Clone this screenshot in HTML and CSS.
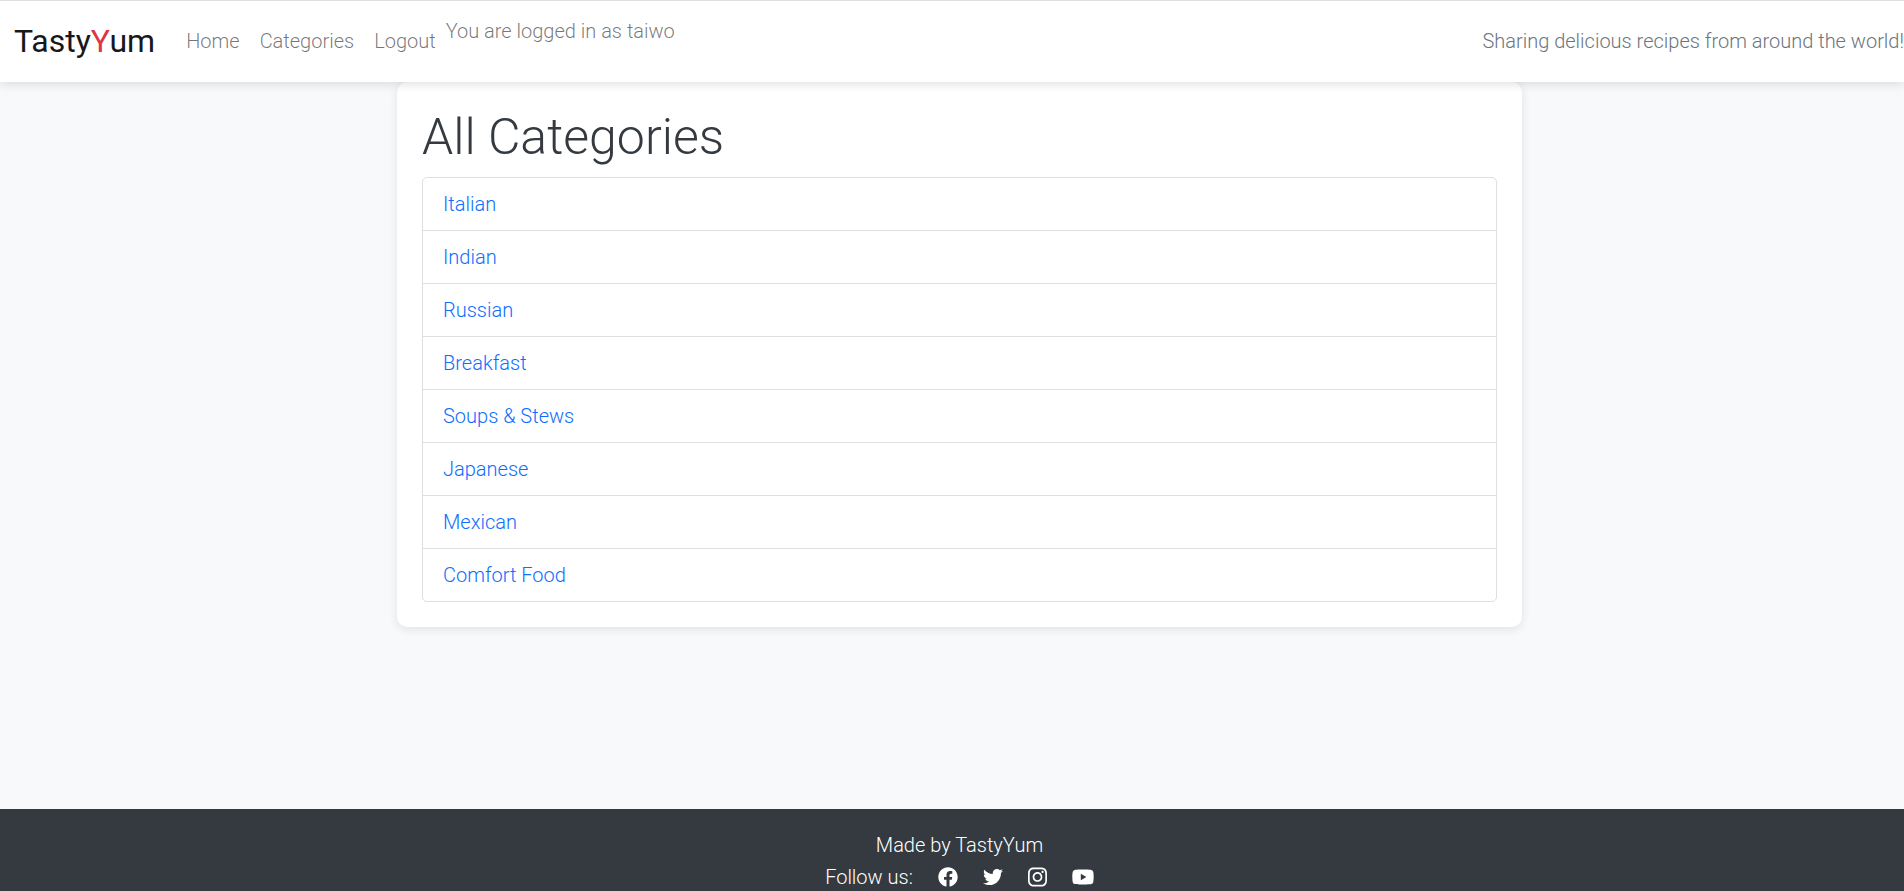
FILE: index.html
```
<!DOCTYPE html>
<html lang="en">
<head>
<meta charset="utf-8">
<title>TastyYum - All Categories</title>
<link rel="stylesheet" href="styles.css">
</head>
<body>
<header class="navbar">
  <a class="brand" href="#">Tasty<span class="brand-accent">Y</span>um</a>
  <nav class="nav-links">
    <a href="#">Home</a>
    <a href="#">Categories</a>
    <a href="#">Logout</a>
  </nav>
  <p class="status">You are logged in as taiwo</p>
  <p class="slogan">Sharing delicious recipes from around the world!</p>
</header>
<main class="content">
  <section class="card">
    <h1>All Categories</h1>
    <ul class="categories">
      <li><a href="#">Italian</a></li>
      <li><a href="#">Indian</a></li>
      <li><a href="#">Russian</a></li>
      <li><a href="#">Breakfast</a></li>
      <li><a href="#">Soups &amp; Stews</a></li>
      <li><a href="#">Japanese</a></li>
      <li><a href="#">Mexican</a></li>
      <li><a href="#">Comfort Food</a></li>
    </ul>
  </section>
</main>
<footer class="footer">
  <p>Made by TastyYum</p>
  <div class="social">
    <span>Follow us:</span>
    <a href="#" aria-label="Facebook"><svg width="20" height="20" viewBox="0 0 512 512"><path d="M504 256C504 119 393 8 256 8S8 119 8 256c0 123.780 90.690 226.380 209.250 245V327.690h-63V256h63v-54.640c0-62.150 37-96.480 93.670-96.480 27.140 0 55.520 4.840 55.520 4.840v61h-31.280c-30.800 0-40.410 19.120-40.410 38.730V256h68.780l-11 71.690h-57.780V501C413.310 482.380 504 379.780 504 256z"/></svg></a>
    <a href="#" aria-label="Twitter"><svg width="20" height="20" viewBox="0 0 512 512"><path d="M459.370 151.716c.325 4.548.325 9.097.325 13.645 0 138.720-105.583 298.558-298.558 298.558-59.452 0-114.680-17.219-161.137-47.106 8.447.974 16.568 1.299 25.340 1.299 49.055 0 94.213-16.568 130.274-44.832-46.132-.975-84.792-31.188-98.112-72.772 6.498.974 12.995 1.624 19.818 1.624 9.421 0 18.843-1.300 27.614-3.573-48.081-9.747-84.143-51.980-84.143-102.985v-1.299c13.969 7.797 30.214 12.670 47.431 13.319-28.264-18.843-46.781-51.005-46.781-87.391 0-19.492 5.197-37.360 14.294-52.954 51.655 63.675 129.300 105.258 216.365 109.807-1.624-7.797-2.599-15.918-2.599-24.040 0-57.828 46.782-104.934 104.934-104.934 30.213 0 57.502 12.670 76.670 33.137 23.715-4.548 46.456-13.320 66.599-25.340-7.798 24.366-24.366 44.833-46.132 57.827 21.117-2.273 41.584-8.122 60.426-16.243-14.292 20.791-32.161 39.308-52.628 54.253z"/></svg></a>
    <a href="#" aria-label="Instagram"><svg width="19" height="20" viewBox="0 32 448 448"><path d="M224.100 141c-63.600 0-114.900 51.300-114.900 114.900s51.300 114.900 114.900 114.900S339 319.500 339 255.900 287.700 141 224.100 141zm0 189.600c-41.100 0-74.700-33.500-74.700-74.700s33.500-74.700 74.700-74.700 74.700 33.500 74.700 74.700-33.600 74.700-74.700 74.700zm146.400-194.300c0 14.900-12 26.800-26.800 26.800-14.900 0-26.800-12-26.800-26.800s12-26.800 26.800-26.800 26.800 12 26.800 26.800zm76.100 27.200c-1.700-35.900-9.900-67.700-36.200-93.900-26.200-26.200-58-34.400-93.900-36.200-37-2.100-147.900-2.100-184.900 0-35.800 1.700-67.600 9.900-93.900 36.100s-34.400 58-36.200 93.900c-2.100 37-2.100 147.900 0 184.900 1.700 35.900 9.900 67.700 36.200 93.900s58 34.400 93.900 36.200c37 2.100 147.900 2.100 184.900 0 35.900-1.700 67.700-9.900 93.900-36.200 26.200-26.200 34.400-58 36.200-93.900 2.100-37 2.100-147.800 0-184.800zM398.800 388c-7.800 19.600-22.900 34.700-42.600 42.600-29.500 11.700-99.500 9-132.100 9s-102.700 2.600-132.100-9c-19.600-7.800-34.700-22.900-42.600-42.600-11.700-29.500-9-99.500-9-132.100s-2.600-102.700 9-132.100c7.800-19.600 22.900-34.700 42.600-42.600 29.500-11.700 99.500-9 132.100-9s102.700-2.600 132.100 9c19.600 7.800 34.700 22.900 42.600 42.600 11.700 29.500 9 99.500 9 132.100s2.700 102.700-9 132.100z"/></svg></a>
    <a href="#" aria-label="YouTube"><svg width="22" height="20" viewBox="12 0 552 512"><path d="M549.655 124.083c-6.281-23.650-24.787-42.276-48.284-48.597C458.781 64 288 64 288 64S117.220 64 74.629 75.486c-23.497 6.322-42.003 24.947-48.284 48.597-11.412 42.867-11.412 132.305-11.412 132.305s0 89.438 11.412 132.305c6.281 23.650 24.787 41.500 48.284 47.821C117.220 448 288 448 288 448s170.780 0 213.371-11.486c23.497-6.321 42.003-24.171 48.284-47.821 11.412-42.867 11.412-132.305 11.412-132.305s0-89.438-11.412-132.305zm-317.510 213.508V175.185l142.739 81.205-142.739 81.201z"/></svg></a>
  </div>
</footer>
</body>
</html>
```
FILE: styles.css
```
* {
  box-sizing: border-box;
}

body {
  margin: 0;
  min-height: 100vh;
  display: flex;
  flex-direction: column;
  background: #f8f9fb;
  color: #343a40;
  font: 300 20px/32px Roboto, "Liberation Sans", sans-serif;
}

a {
  color: inherit;
  text-decoration: none;
}

p,
h1,
ul {
  margin: 0;
  padding: 0;
}

.navbar {
  position: relative;
  display: flex;
  align-items: center;
  padding: 24px 0 25px 14px;
  background: #fff;
  border-top: 1px solid #dfdfdf;
  box-shadow: 0 2px 10px rgba(0, 0, 0, 0.13);
}

.brand {
  margin-right: 21px;
  color: #16181b;
  font-size: 32px;
  font-weight: 400;
}

.brand-accent {
  color: #dc3545;
}

.nav-links {
  display: flex;
  color: rgba(0, 0, 0, 0.55);
}

.nav-links a {
  padding: 0 10px;
}

.status {
  align-self: flex-start;
  margin-top: -10px;
  color: rgba(0, 0, 0, 0.55);
}

.slogan {
  margin-left: auto;
  color: #6c757d;
}

.content {
  flex: 1;
  padding-left: 15px;
}

.card {
  max-width: 1125px;
  margin: 0 auto;
  padding: 25px;
  background: #fff;
  border-radius: 10px;
  box-shadow: 0 2px 10px rgba(0, 0, 0, 0.1);
}

h1 {
  margin-bottom: 10px;
  font-size: 50px;
  font-weight: 300;
  line-height: 60px;
}

.categories {
  list-style: none;
  border: 1px solid #dfdfdf;
  border-radius: 5px;
}

.categories li {
  padding: 10px 20px;
  color: #0d6efd;
}

.categories li + li {
  border-top: 1px solid #dfdfdf;
}

.footer {
  padding: 20px 0 0 15px;
  background: #343a40;
  color: #fff;
  text-align: center;
}

.social {
  display: flex;
  justify-content: center;
  align-items: center;
  gap: 25px;
  padding-top: 2px;
  line-height: 28px;
}

.social svg {
  display: block;
  fill: #fff;
}
```
